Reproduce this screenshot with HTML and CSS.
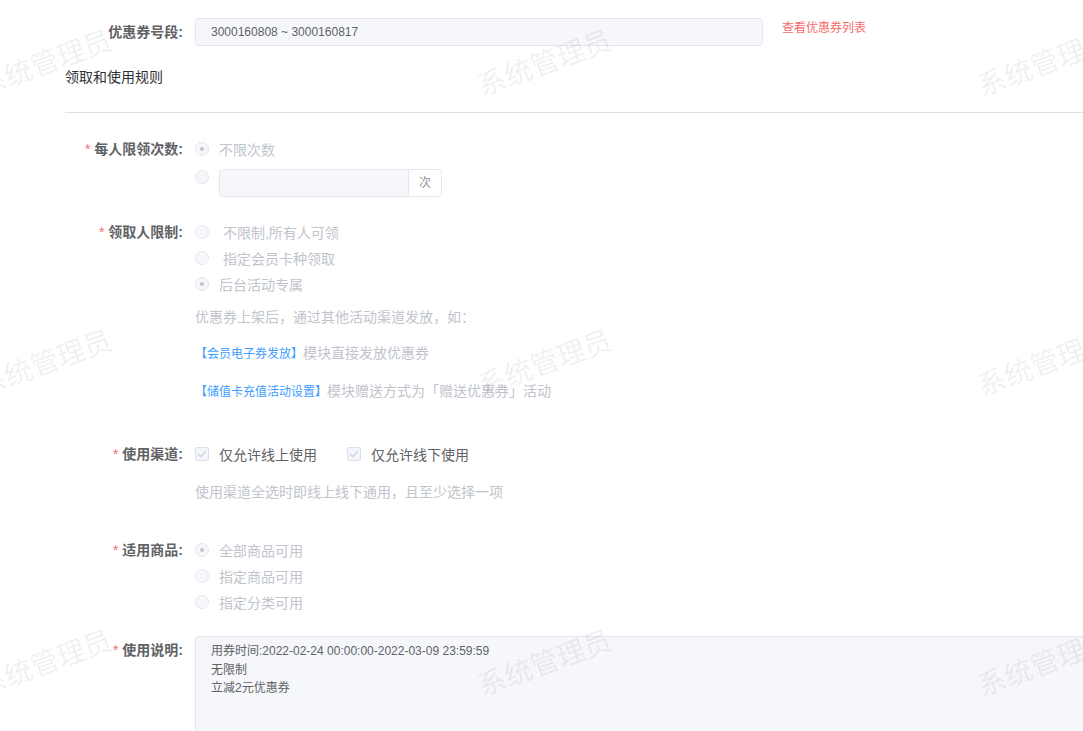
FILE: index.html
```html
<!DOCTYPE html>
<html lang="zh-CN">
<head>
    <meta charset="UTF-8">
    <meta name="viewport" content="width=device-width, initial-scale=1.0">
    <title>优惠券详情</title>
    <link rel="stylesheet" href="styles.css">
</head>
<body>
    <div class="page">
        <div class="form-item first">
            <label class="item-label tall">优惠券号段:</label>
            <div class="item-content inline">
                <div class="text-input wide">3000160808 ~ 3000160817</div>
                <a class="red-link" href="#">查看优惠券列表</a>
            </div>
        </div>

        <div class="section-title">领取和使用规则</div>
        <div class="divider"></div>

        <div class="form-item gap-23">
            <label class="item-label required">每人限领次数:</label>
            <div class="item-content">
                <div class="radio-row">
                    <span class="radio checked"></span>
                    <span class="radio-text">不限次数</span>
                </div>
                <div class="radio-row with-input">
                    <span class="radio"></span>
                    <div class="input-group">
                        <div class="text-input small"></div>
                        <span class="append">次</span>
                    </div>
                </div>
            </div>
        </div>

        <div class="form-item gap-22">
            <label class="item-label required">领取人限制:</label>
            <div class="item-content">
                <div class="radio-row">
                    <span class="radio"></span>
                    <span class="radio-text">&nbsp;不限制,所有人可领</span>
                </div>
                <div class="radio-row">
                    <span class="radio"></span>
                    <span class="radio-text">&nbsp;指定会员卡种领取</span>
                </div>
                <div class="radio-row">
                    <span class="radio checked"></span>
                    <span class="radio-text">后台活动专属</span>
                </div>
                <p class="help first-help">优惠券上架后，通过其他活动渠道发放，如：</p>
                <p class="help line-2"><span class="blue">【会员电子券发放】</span>模块直接发放优惠券</p>
                <p class="help line-3"><span class="blue">【储值卡充值活动设置】</span>模块赠送方式为「赠送优惠券」活动</p>
            </div>
        </div>

        <div class="form-item gap-39">
            <label class="item-label required">使用渠道:</label>
            <div class="item-content">
                <div class="check-row">
                    <span class="checkbox"></span>
                    <span class="check-text">仅允许线上使用</span>
                    <span class="checkbox"></span>
                    <span class="check-text">仅允许线下使用</span>
                </div>
                <p class="help channel-help">使用渠道全选时即线上线下通用，且至少选择一项</p>
            </div>
        </div>

        <div class="form-item gap-35">
            <label class="item-label required">适用商品:</label>
            <div class="item-content">
                <div class="radio-row">
                    <span class="radio checked"></span>
                    <span class="radio-text">全部商品可用</span>
                </div>
                <div class="radio-row">
                    <span class="radio"></span>
                    <span class="radio-text">指定商品可用</span>
                </div>
                <div class="radio-row">
                    <span class="radio"></span>
                    <span class="radio-text">指定分类可用</span>
                </div>
            </div>
        </div>

        <div class="form-item gap-21">
            <label class="item-label required tall">使用说明:</label>
            <div class="item-content">
                <textarea class="textarea" readonly>用券时间:2022-02-24 00:00:00-2022-03-09 23:59:59
无限制
立减2元优惠券</textarea>
            </div>
        </div>
    </div>

    <div class="watermark">
        <div><span>系统管理员</span></div>
        <div><span>系统管理员</span></div>
        <div><span>系统管理员</span></div>
        <div><span>系统管理员</span></div>
        <div><span>系统管理员</span></div>
        <div><span>系统管理员</span></div>
        <div><span>系统管理员</span></div>
        <div><span>系统管理员</span></div>
        <div><span>系统管理员</span></div>
    </div>
</body>
</html>
```

FILE: styles.css
```css
body {
    margin: 0;
    padding: 0;
    background-color: #fff;
    font-family: "Liberation Sans", "Noto Sans CJK SC", sans-serif;
    font-size: 14px;
    color: #606266;
    overflow: hidden;
    height: 100vh;
}

.page {
    padding: 18px 0 0 65px;
}

.form-item {
    display: flex;
    align-items: flex-start;
}

.gap-21 { margin-top: 21px; }
.gap-22 { margin-top: 22px; }
.gap-23 { margin-top: 23px; }
.gap-35 { margin-top: 35px; }
.gap-39 { margin-top: 39px; }

.item-label {
    flex: 0 0 130px;
    box-sizing: border-box;
    padding-right: 12px;
    text-align: right;
    font-weight: bold;
    color: #606266;
    line-height: 26px;
    white-space: nowrap;
}

.item-label.tall {
    line-height: 28px;
}

.item-label.required::before {
    content: "*";
    color: #f56c6c;
    font-weight: normal;
    margin-right: 4px;
}

.item-content {
    flex: 1;
    min-width: 0;
}

.item-content.inline {
    display: flex;
    align-items: flex-start;
}

.text-input {
    box-sizing: border-box;
    height: 28px;
    line-height: 26px;
    padding: 0 15px;
    background-color: #f5f7fa;
    border: 1px solid #e4e7ed;
    border-radius: 4px;
    font-size: 12px;
    color: #606266;
}

.text-input.wide {
    width: 568px;
}

.red-link {
    margin-left: 19px;
    line-height: 20px;
    font-size: 12px;
    color: #f56c6c;
    text-decoration: none;
}

.section-title {
    margin-top: 21px;
    line-height: 20px;
    color: #303133;
}

.divider {
    margin-top: 25px;
    height: 1px;
    background-color: #dcdfe6;
}

.radio-row {
    display: flex;
    align-items: center;
    height: 26px;
}

.radio-row.with-input {
    align-items: flex-start;
    height: 28px;
    margin-top: 7px;
}

.radio-row.with-input .radio {
    margin-top: 1px;
}

.radio {
    position: relative;
    flex: 0 0 auto;
    box-sizing: border-box;
    width: 14px;
    height: 14px;
    border: 1px solid #e4e7ed;
    border-radius: 50%;
    background-color: #f5f7fa;
}

.radio.checked::after {
    content: "";
    position: absolute;
    left: 50%;
    top: 50%;
    width: 4px;
    height: 4px;
    margin: -2px 0 0 -2px;
    border-radius: 50%;
    background-color: #c0c4cc;
}

.radio-text {
    padding-left: 10px;
    color: #c0c4cc;
    white-space: nowrap;
}

.input-group {
    display: flex;
    margin-left: 10px;
}

.text-input.small {
    width: 190px;
    border-radius: 4px 0 0 4px;
}

.append {
    box-sizing: border-box;
    width: 33px;
    height: 28px;
    line-height: 26px;
    text-align: center;
    border: 1px solid #e4e7ed;
    border-left: none;
    border-radius: 0 4px 4px 0;
    background-color: #fff;
    font-size: 12px;
    color: #909399;
}

.help {
    margin: 0;
    line-height: 20px;
    color: #c0c4cc;
    white-space: nowrap;
}

.first-help { margin-top: 10px; }
.line-2 { margin-top: 16px; }
.line-3 { margin-top: 17px; }
.channel-help { margin-top: 15px; }

.blue {
    font-size: 12px;
    color: #409eff;
}

.check-row {
    display: flex;
    align-items: center;
    height: 26px;
}

.checkbox {
    position: relative;
    box-sizing: border-box;
    width: 14px;
    height: 14px;
    border: 1px solid #dcdfe6;
    border-radius: 2px;
    background-color: #f2f6fc;
}

.checkbox::after {
    content: "";
    position: absolute;
    left: 4px;
    top: 1px;
    width: 3px;
    height: 7px;
    border: 1px solid #c0c4cc;
    border-left: none;
    border-top: none;
    transform: rotate(45deg);
}

.check-text {
    padding-left: 10px;
    margin-right: 30px;
    color: #606266;
}

.textarea {
    display: block;
    box-sizing: border-box;
    width: 1000px;
    height: 130px;
    margin: 0;
    padding: 5px 15px;
    border: 1px solid #e4e7ed;
    border-radius: 4px;
    background-color: #f5f7fa;
    font-family: "Liberation Sans", "Noto Sans CJK SC", sans-serif;
    font-size: 12px;
    line-height: 18.5px;
    color: #606266;
    resize: none;
    outline: none;
}

.watermark {
    position: fixed;
    top: -89px;
    left: -206px;
    display: grid;
    grid-template-columns: repeat(3, 500px);
    grid-auto-rows: 300px;
    pointer-events: none;
    z-index: 10;
}

.watermark div {
    display: flex;
    align-items: center;
    justify-content: center;
}

.watermark span {
    font-family: "Noto Sans CJK SC", sans-serif;
    font-size: 28px;
    color: rgba(0, 0, 0, 0.06);
    white-space: nowrap;
    transform: rotate(-20deg);
}
```
